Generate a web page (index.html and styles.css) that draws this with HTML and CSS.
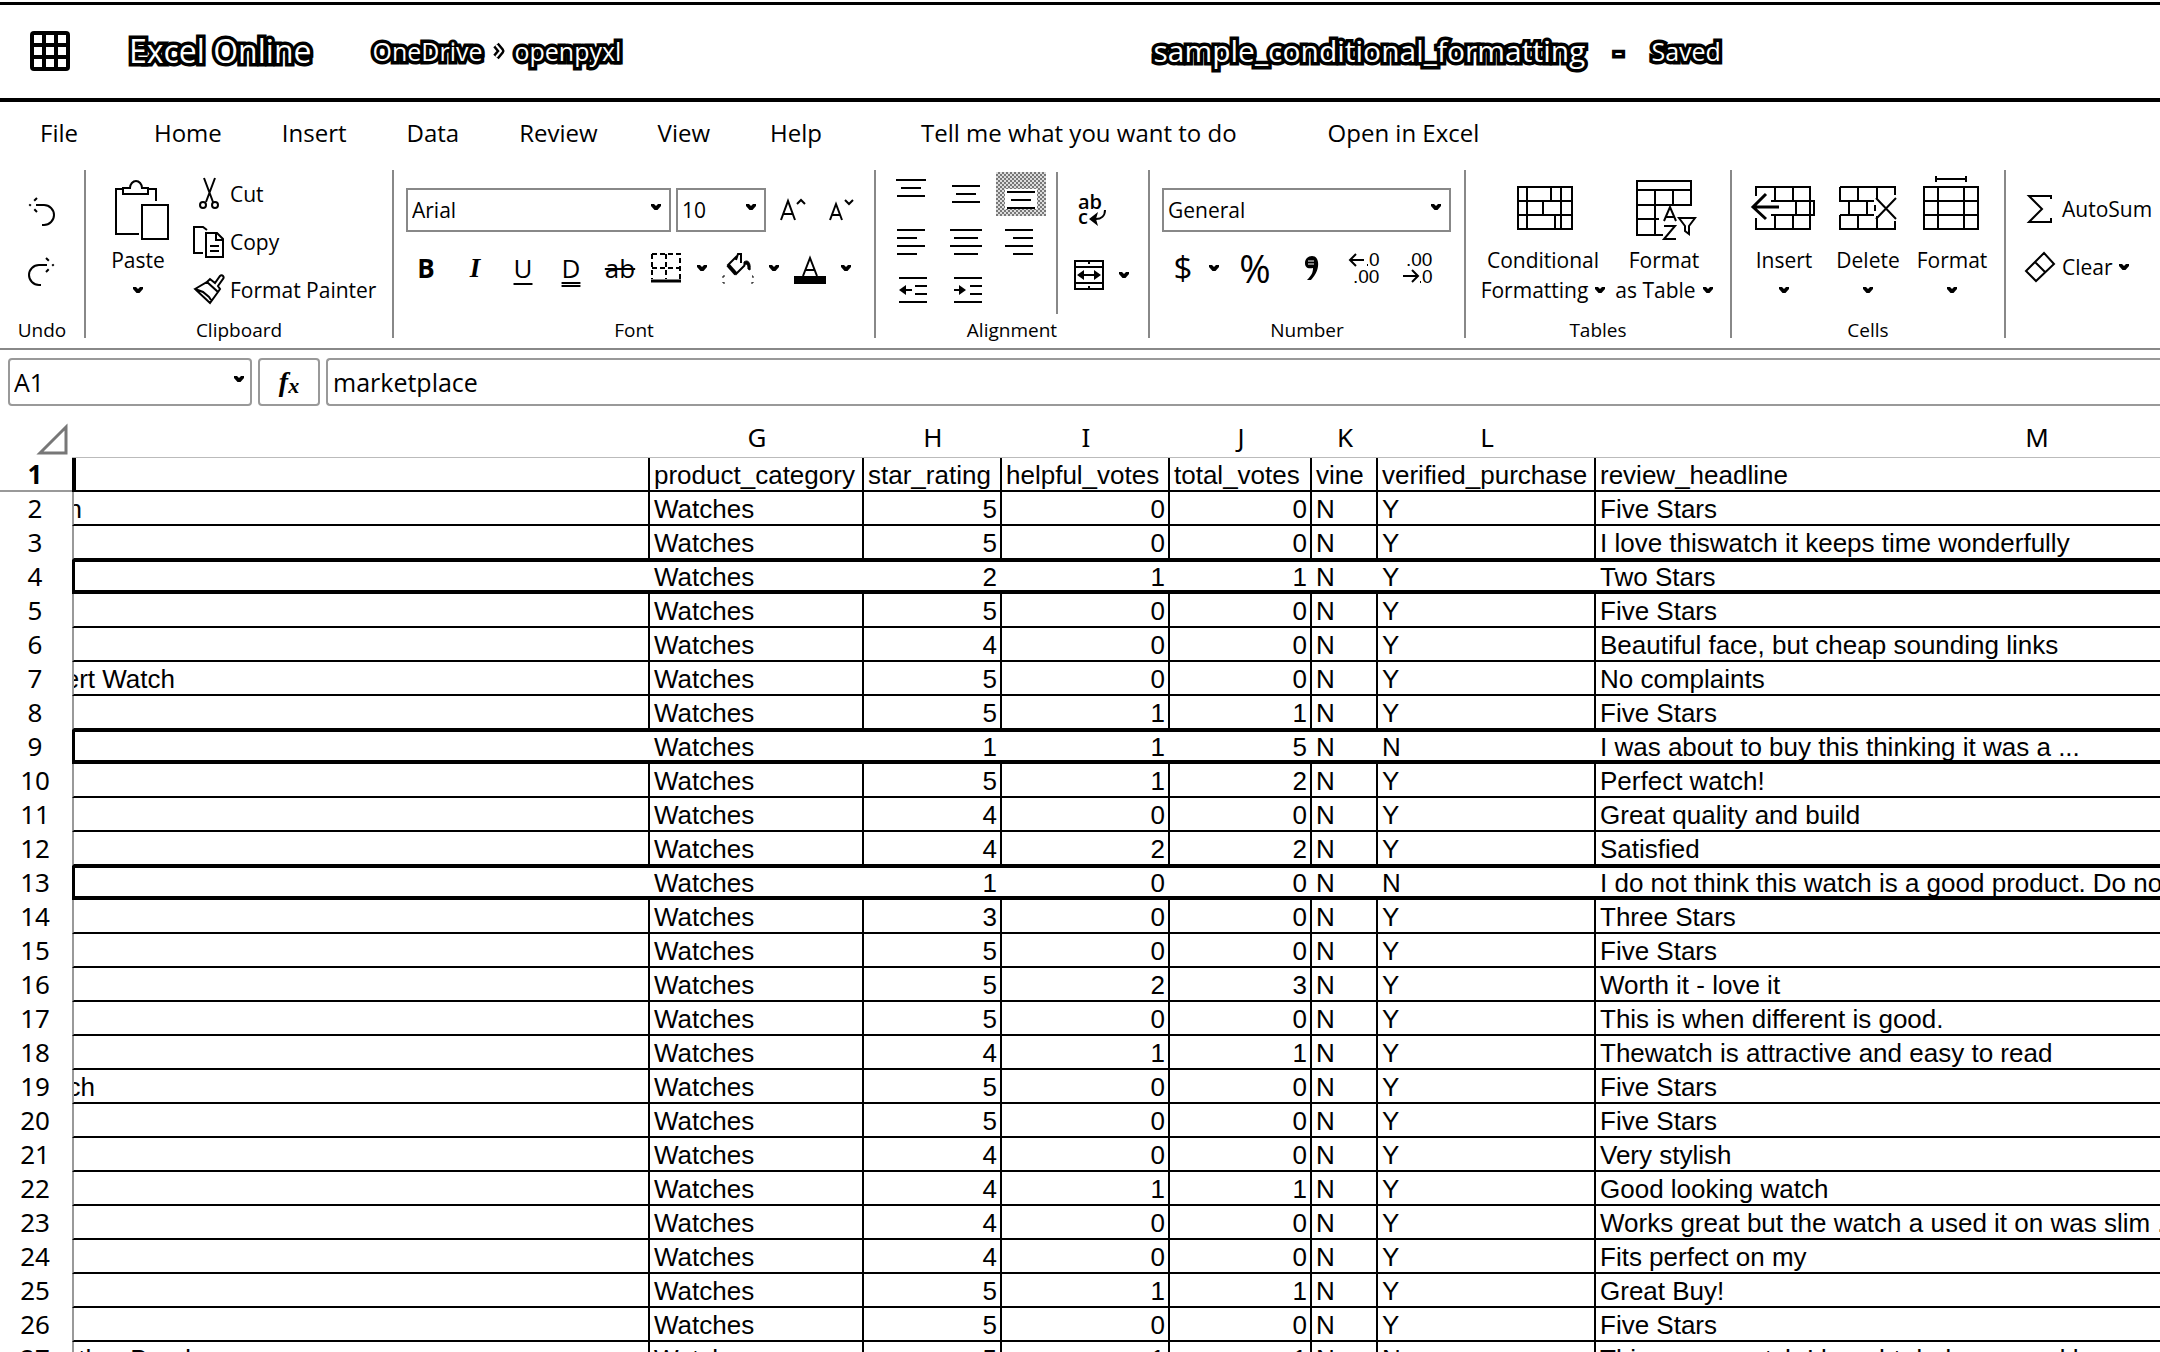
FILE: index.html
```html
<!DOCTYPE html>
<html lang="en">
<head>
<meta charset="utf-8">
<title>sample_conditional_formatting - Excel Online</title>
<link rel="stylesheet" href="styles.css">
</head>
<body>
<svg class="defs" aria-hidden="true">
  <symbol id="chev" viewBox="0 0 10 6"><path d="M0 0h3l2 2 2-2h3v2L6.500 6h-3L0 2z" fill="#000"/></symbol>
</svg>
<header class="top">
  <button class="waffle" aria-label="App launcher"><svg width="42" height="42" viewBox="0 0 42 42"><rect x="1" y="1" width="40" height="40" rx="4"/><path fill="#fff" d="M5 5h8v8H5zM17 5h8v8h-8zM29 5h8v8h-8zM5 17h8v8H5zM17 17h8v8h-8zM29 17h8v8h-8zM5 29h8v8H5zM17 29h8v8h-8zM29 29h8v8h-8z"/></svg></button>
  <span class="brand outline">Excel Online</span>
  <nav class="crumbs outline"><a href="#">OneDrive</a><svg width="14" height="20" viewBox="0 0 14 20"><path d="M4 4l5 6-5 6" fill="none" stroke="#000" stroke-width="7"/><path d="M4 4l5 6-5 6" fill="none" stroke="#fff" stroke-width="2"/></svg><a href="#">openpyxl</a></nav>
  <div class="doc outline"><span class="name">sample_conditional_formatting</span><span>-</span><span>Saved</span></div>
</header>
<nav class="menu">
  <a class="file" href="#">File</a><a href="#">Home</a><a href="#">Insert</a><a href="#">Data</a><a href="#">Review</a><a href="#">View</a><a class="help" href="#">Help</a><a class="tell" href="#">Tell me what you want to do</a><a href="#">Open in Excel</a>
</nav>
<section class="ribbon">
  <div class="group undo">
    <div class="body">
      <button aria-label="Undo"><svg width="26" height="32" viewBox="0 0 26 32"><path d="M7 9h8a10 10 0 0 1 0 20h-2" class="ln"/><path d="M8 2L1 9l7 7" class="ln" stroke-dasharray="4 5 2 5"/></svg></button>
      <button aria-label="Redo"><svg width="26" height="32" viewBox="0 0 26 32"><path d="M18 9h-8a10 10 0 0 0 0 20h2" class="ln"/><path d="M17 2l7 7-7 7" class="ln" stroke-dasharray="4 5 2 5"/></svg></button>
    </div>
    <div class="label">Undo</div>
  </div>
  <div class="group clipboard">
    <div class="body">
      <button class="big paste"><svg width="56" height="60" viewBox="0 0 56 60"><path class="ln" d="M9 9H2v45h23M35 9h7v12M9 14V8h7c0-4 3-7 6-7s6 3 6 7h6v6z"/><rect class="ln" x="28" y="25" width="26" height="34"/></svg><span>Paste</span><span><svg class="chev"><use href="#chev"/></svg></span></button>
      <div class="list">
        <button><svg width="34" height="34" viewBox="0 0 34 34"><path class="ln" d="M12 1l9 24M23 1l-9 24"/><circle class="ln" cx="11" cy="28" r="3"/><circle class="ln" cx="23" cy="28" r="3"/></svg>Cut</button>
        <button><svg width="34" height="34" viewBox="0 0 34 34"><path class="ln" d="M11 28H2V2h9l4 3M14 8h11l6 6v18H14zM24 8v7h7M18 21h9M18 26h9"/></svg>Copy</button>
        <button><svg width="34" height="34" viewBox="0 0 34 34"><path class="ln" d="M3 16l12-7 11 10-8 11zM15 9l3-3 5 4 5-7c2-2 5 1 3 3l-5 7 2 3-2 3M3 16l8 3 6 5 2 3"/></svg>Format Painter</button>
      </div>
    </div>
    <div class="label">Clipboard</div>
  </div>
  <div class="group font">
    <div class="body stack">
      <div class="line">
        <span class="drop face"><select aria-label="Font"><option>Arial</option></select><svg class="chev"><use href="#chev"/></svg></span>
        <span class="drop size"><select aria-label="Font size"><option>10</option></select><svg class="chev"><use href="#chev"/></svg></span>
        <button class="grow" aria-label="Grow font"><svg width="28" height="24" viewBox="0 0 28 24"><path class="ln" d="M2 22L9 3l7 19M4 16h10M18 6l4-4 4 4"/></svg></button>
        <button class="grow shrink" aria-label="Shrink font"><svg width="28" height="24" viewBox="0 0 28 24"><path class="ln" d="M3 22L9 6l6 16M5 17h8M18 2l4 4 4-4"/></svg></button>
      </div>
      <div class="line tools">
        <button class="t b">B</button><button class="t i">I</button><button class="t u">U</button><button class="t d">D</button><button class="t s">ab</button>
        <button class="t" aria-label="Borders"><svg width="32" height="32" viewBox="0 0 32 32"><path class="ln" d="M2 2h28v25M2 2v25M16 2v25M2 16h28" stroke-dasharray="5 3"/><path d="M1 29h30" stroke="#000" stroke-width="3"/></svg></button><button class="arrow" aria-label="More borders"><svg class="chev"><use href="#chev"/></svg></button>
        <button class="t" aria-label="Fill colour"><svg width="32" height="32" viewBox="0 0 32 32"><path d="M14 8l2-6h3v9M15 4L6 13l8 9 9-9" fill="none" stroke="#000" stroke-width="2"/><path d="M6 13l8 9" stroke="#000" stroke-width="4"/><path d="M22 10c4-3 7 1 6 8l-2-1c0-4-1-6-4-4zM1 26v-2h2M30 24h1v2M1 30v1h2M29 31h2v-1" stroke="#000" fill="none" stroke-width="1"/><path d="M22 10c4-3 7 1 6 8l-2-1c0-4-1-6-4-4z"/></svg></button><button class="arrow" aria-label="More fills"><svg class="chev"><use href="#chev"/></svg></button>
        <button class="t" aria-label="Font colour"><svg width="32" height="32" viewBox="0 0 32 32"><path class="ln" d="M9 24l7-18 7 18M12 18h8"/><path d="M0 24h32v8H0z"/></svg></button><button class="arrow" aria-label="More font colours"><svg class="chev"><use href="#chev"/></svg></button>
      </div>
    </div>
    <div class="label">Font</div>
  </div>
  <div class="group align">
    <div class="body">
      <div class="tiles">
        <button aria-label="Top align"><svg width="32" height="32" viewBox="0 0 32 32"><path class="ln" d="M1 2h30M6 10h20M2 18h28"/></svg></button>
        <button aria-label="Middle align"><svg width="32" height="32" viewBox="0 0 32 32"><path class="ln" d="M2 8h28M6 16h20M2 24h28"/></svg></button>
        <button class="on" aria-label="Bottom align"><svg width="32" height="32" viewBox="0 0 32 32"><path d="M0 11h32v20H0z" fill="#fff"/><path class="ln" d="M2 14h28M6 22h20M2 30h28"/></svg></button>
        <button aria-label="Align left"><svg width="32" height="32" viewBox="0 0 32 32"><path class="ln" d="M2 4h28M2 12h20M2 20h28M2 28h20"/></svg></button>
        <button aria-label="Centre"><svg width="32" height="32" viewBox="0 0 32 32"><path class="ln" d="M0 4h32M4 12h24M0 20h32M4 28h24"/></svg></button>
        <button aria-label="Align right"><svg width="32" height="32" viewBox="0 0 32 32"><path class="ln" d="M0 4h28M8 12h20M0 20h28M8 28h20"/></svg></button>
        <button aria-label="Decrease indent"><svg width="32" height="32" viewBox="0 0 32 32"><path class="ln" d="M4 4h28M20 12h12M20 20h12M4 28h28M8 16h9"/><path d="M4 16l7-5v10z"/></svg></button>
        <button aria-label="Increase indent"><svg width="32" height="32" viewBox="0 0 32 32"><path class="ln" d="M4 4h28M20 12h12M20 20h12M4 28h28M4 16h9"/><path d="M16 16l-7-5v10z"/></svg></button>
      </div>
      <div class="side">
        <button aria-label="Wrap text"><svg width="32" height="34" viewBox="0 0 32 34"><text class="wrap"><tspan x="3" y="17">ab</tspan><tspan x="3" y="32">c</tspan></text><path class="ln" d="M30 18c0 6-4 9-9 9"/><path d="M14 27l9-7-2 7 2 7z"/></svg></button>
        <span><button aria-label="Merge cells"><svg width="32" height="32" viewBox="0 0 32 32"><path class="ln" d="M2 2h28v28H2zM2 8h28M2 24h28M16 2v3M16 27v3M8 16h16"/><path d="M4 16l7-5v10zM28 16l-7-5v10z"/></svg></button><button class="arrow" aria-label="More merge options"><svg class="chev"><use href="#chev"/></svg></button></span>
      </div>
    </div>
    <div class="label">Alignment</div>
  </div>
  <div class="group number">
    <div class="body stack">
      <div class="line"><span class="drop general"><select aria-label="Number format"><option>General</option></select><svg class="chev"><use href="#chev"/></svg></span></div>
      <div class="line tools">
        <button class="cur">$</button><button class="arrow" aria-label="More currencies"><svg class="chev"><use href="#chev"/></svg></button><button class="pct">%</button>
        <button class="n" aria-label="Comma style"><svg width="32" height="32" viewBox="0 0 32 32"><path d="M16 4c8 0 9 14-1 24h-4c5-5 6-8 6-12-6 1-8-1-8-5 0-4 3-7 7-7z"/><path d="M12 9h6M12 12h6" stroke="#fff"/></svg></button>
        <button class="n" aria-label="Increase decimal"><svg width="34" height="34" viewBox="0 0 34 34"><text x="21" y="15" class="dec">0</text><text x="5" y="32" class="dec">.00</text><path d="M2 9h14M8 3L2 9l6 6M19 14h1" class="ln"/></svg></button>
        <button class="n" aria-label="Decrease decimal"><svg width="34" height="34" viewBox="0 0 34 34"><text x="5" y="15" class="dec">.00</text><text x="21" y="32" class="dec">0</text><path d="M2 25h14M11 19l6 6-6 6M19 31h1" class="ln"/></svg></button>
      </div>
    </div>
    <div class="label">Number</div>
  </div>
  <div class="group tables">
    <div class="body">
      <button class="big wide"><svg width="60" height="60" viewBox="0 0 60 60"><path class="ln" d="M3 7h54v42H3zM3 21h54M3 35h54M12 7v42M46 7v42M36 7v14M28 21v14M40 35v14"/></svg><span>Conditional</span><span>Formatting <svg class="chev"><use href="#chev"/></svg></span></button>
      <button class="big mid"><svg width="60" height="60" viewBox="0 0 60 60"><path class="ln" d="M1 1h54v24H1zM1 10h54M1 25v30h26M1 39h22M19 10v45M37 10v15"/><path d="M27 27h16v33H27z" fill="#fff"/><path class="ln" d="M28 41l6-14 6 14M30 37h8M28 46h11L28 59h12M43 38h16l-6 8v8l-4-3v-5z"/></svg><span>Format</span><span>as Table <svg class="chev"><use href="#chev"/></svg></span></button>
    </div>
    <div class="label">Tables</div>
  </div>
  <div class="group cells">
    <div class="body">
      <button class="big"><svg width="66" height="60" viewBox="0 0 66 60"><path class="ln" d="M5 7h54v42H5zM5 21h58v14H5M24 7v14M42 7v14M45 21v14M24 35v14M42 35v14"/><path d="M4 16h16v22H4z" fill="#fff"/><path d="M2 27h26M15 14L2 27l13 12" fill="none" stroke="#000" stroke-width="3"/></svg><span>Insert</span><span><svg class="chev"><use href="#chev"/></svg></span></button>
      <button class="big"><svg width="66" height="60" viewBox="0 0 66 60"><path class="ln" d="M5 7h55v8M5 7v14h34M5 35v14h55v-8M5 35h34M14 21v14M32 21v14M23 7v14M42 7v12M23 35v14M42 36v13"/><path class="ln" d="M41 18l20 21M61 18L41 39M40 25v6"/></svg><span>Delete</span><span><svg class="chev"><use href="#chev"/></svg></span></button>
      <button class="big"><svg width="66" height="60" viewBox="0 0 66 60"><path class="ln" d="M5 7h54v42H5zM5 21h54M5 35h54M19 7v42M45 7v42M17-1h30M17-4v6M47-4v6"/></svg><span>Format</span><span><svg class="chev"><use href="#chev"/></svg></span></button>
    </div>
    <div class="label">Cells</div>
  </div>
  <div class="editing">
    <button><svg width="32" height="32" viewBox="0 0 32 32"><path class="ln" d="M27 6V3H5l13 13L5 29h22v-4"/></svg>AutoSum</button>
    <button><svg width="32" height="32" viewBox="0 0 32 32"><path class="ln" d="M20 2l10 11-18 17L2 20zM11 11l10 10"/></svg>Clear <svg class="chev"><use href="#chev"/></svg></button>
  </div>
</section>
<div class="formula">
  <span class="drop ref"><input aria-label="Name box" value="A1"><svg class="chev"><use href="#chev"/></svg></span>
  <button class="fx" aria-label="Insert function"><i>f</i><sub>x</sub></button>
  <input class="value" aria-label="Formula" value="marketplace">
</div>
<main class="sheet">
<table>
<colgroup><col class="c0"><col class="cf"><col class="cg"><col class="ch"><col class="ci"><col class="cj"><col class="ck"><col class="cl"><col class="cm"></colgroup>
<thead><tr><th><svg width="32" height="32" viewBox="0 0 32 32"><path d="M4 30L30 4v26z" fill="none" stroke="#777" stroke-width="3"/></svg></th><th></th><th>G</th><th>H</th><th>I</th><th>J</th><th>K</th><th>L</th><th>M</th></tr></thead>
<tbody>
<tr class="first"><th>1</th><td></td><td>product_category</td><td class="l">star_rating</td><td class="l">helpful_votes</td><td class="l">total_votes</td><td>vine</td><td>verified_purchase</td><td>review_headline</td></tr>
<tr><th>2</th><td><span class="tail" style="width:8px">n</span></td><td>Watches</td><td>5</td><td>0</td><td>0</td><td>N</td><td>Y</td><td>Five Stars</td></tr>
<tr><th>3</th><td></td><td>Watches</td><td>5</td><td>0</td><td>0</td><td>N</td><td>Y</td><td>I love thiswatch it keeps time wonderfully</td></tr>
<tr class="hit"><th>4</th><td></td><td>Watches</td><td>2</td><td>1</td><td>1</td><td>N</td><td>Y</td><td>Two Stars</td></tr>
<tr><th>5</th><td></td><td>Watches</td><td>5</td><td>0</td><td>0</td><td>N</td><td>Y</td><td>Five Stars</td></tr>
<tr><th>6</th><td></td><td>Watches</td><td>4</td><td>0</td><td>0</td><td>N</td><td>Y</td><td>Beautiful face, but cheap sounding links</td></tr>
<tr><th>7</th><td><span class="tail" style="width:101px">ert Watch</span></td><td>Watches</td><td>5</td><td>0</td><td>0</td><td>N</td><td>Y</td><td>No complaints</td></tr>
<tr><th>8</th><td></td><td>Watches</td><td>5</td><td>1</td><td>1</td><td>N</td><td>Y</td><td>Five Stars</td></tr>
<tr class="hit"><th>9</th><td></td><td>Watches</td><td>1</td><td>1</td><td>5</td><td>N</td><td>N</td><td>I was about to buy this thinking it was a ...</td></tr>
<tr><th>10</th><td></td><td>Watches</td><td>5</td><td>1</td><td>2</td><td>N</td><td>Y</td><td>Perfect watch!</td></tr>
<tr><th>11</th><td></td><td>Watches</td><td>4</td><td>0</td><td>0</td><td>N</td><td>Y</td><td>Great quality and build</td></tr>
<tr><th>12</th><td></td><td>Watches</td><td>4</td><td>2</td><td>2</td><td>N</td><td>Y</td><td>Satisfied</td></tr>
<tr class="hit"><th>13</th><td></td><td>Watches</td><td>1</td><td>0</td><td>0</td><td>N</td><td>N</td><td>I do not think this watch is a good product. Do not</td></tr>
<tr><th>14</th><td></td><td>Watches</td><td>3</td><td>0</td><td>0</td><td>N</td><td>Y</td><td>Three Stars</td></tr>
<tr><th>15</th><td></td><td>Watches</td><td>5</td><td>0</td><td>0</td><td>N</td><td>Y</td><td>Five Stars</td></tr>
<tr><th>16</th><td></td><td>Watches</td><td>5</td><td>2</td><td>3</td><td>N</td><td>Y</td><td>Worth it - love it</td></tr>
<tr><th>17</th><td></td><td>Watches</td><td>5</td><td>0</td><td>0</td><td>N</td><td>Y</td><td>This is when different is good.</td></tr>
<tr><th>18</th><td></td><td>Watches</td><td>4</td><td>1</td><td>1</td><td>N</td><td>Y</td><td>Thewatch is attractive and easy to read</td></tr>
<tr><th>19</th><td><span class="tail" style="width:21px">ch</span></td><td>Watches</td><td>5</td><td>0</td><td>0</td><td>N</td><td>Y</td><td>Five Stars</td></tr>
<tr><th>20</th><td></td><td>Watches</td><td>5</td><td>0</td><td>0</td><td>N</td><td>Y</td><td>Five Stars</td></tr>
<tr><th>21</th><td></td><td>Watches</td><td>4</td><td>0</td><td>0</td><td>N</td><td>Y</td><td>Very stylish</td></tr>
<tr><th>22</th><td></td><td>Watches</td><td>4</td><td>1</td><td>1</td><td>N</td><td>Y</td><td>Good looking watch</td></tr>
<tr><th>23</th><td></td><td>Watches</td><td>4</td><td>0</td><td>0</td><td>N</td><td>Y</td><td>Works great but the watch a used it on was slim ...</td></tr>
<tr><th>24</th><td></td><td>Watches</td><td>4</td><td>0</td><td>0</td><td>N</td><td>Y</td><td>Fits perfect on my</td></tr>
<tr><th>25</th><td></td><td>Watches</td><td>5</td><td>1</td><td>1</td><td>N</td><td>Y</td><td>Great Buy!</td></tr>
<tr><th>26</th><td></td><td>Watches</td><td>5</td><td>0</td><td>0</td><td>N</td><td>Y</td><td>Five Stars</td></tr>
<tr><th>27</th><td><span class="tail" style="width:117px">ther Band</span></td><td>Watches</td><td>5</td><td>1</td><td>1</td><td>N</td><td>N</td><td>This was a watch I bought dad once and he was so thi</td></tr>
</tbody>
</table>
</main>
</body>
</html>
```
FILE: styles.css
```css
* { box-sizing: border-box; }
body {
  margin: 0;
  height: 100vh;
  overflow: hidden;
  display: flex;
  flex-direction: column;
  background: #fff;
  color: #000;
  font: 21px/30px "Open Sans", sans-serif;
}
a { color: inherit; text-decoration: none; }
button { background: none; border: 0; padding: 0; margin: 0; font: inherit; color: inherit; }
svg { display: block; overflow: visible; flex: none; }
.defs { position: absolute; width: 0; height: 0; }
.ln { fill: none; stroke: #000; stroke-width: 2; }
.chev { width: 10px; height: 6px; }

.top {
  flex: none;
  display: flex;
  align-items: center;
  margin-top: 2px;
  height: 100px;
  border-top: 3px solid #000;
  border-bottom: 4px solid #000;
  padding: 0 0 2px 29px;
  white-space: nowrap;
}
.outline { color: #fff; -webkit-text-stroke: 7px #000; stroke-linejoin: round; paint-order: stroke fill; font-size: 25px; }
.top .brand { font-size: 32px; margin-left: 58px; }
.crumbs { display: flex; align-items: center; gap: 9px; margin-left: 61px; }
.doc { display: flex; align-items: center; gap: 29px; margin-left: 532px; }
.doc .name { font-size: 30px; }

.menu { flex: none; display: flex; gap: 60px; padding: 13px 0 19px 40px; font-size: 24px; line-height: 36px; white-space: nowrap; }
.file { margin-right: 16px; }
.help { margin-right: 39px; }
.tell { margin-right: 31px; }

.ribbon { flex: none; display: flex; height: 180px; padding-bottom: 10px; border-bottom: 2px solid #888; white-space: nowrap; }
.group { flex: none; display: flex; flex-direction: column; border-right: 2px solid #888; }
.body { flex: 1; display: flex; }
.label { font-size: 19px; line-height: 16px; text-align: center; }
.undo { width: 86px; }
.undo .body { flex-direction: column; align-items: center; gap: 28px; padding-top: 26px; }
.clipboard { width: 308px; }
.clipboard .body { padding-left: 22px; gap: 24px; }
.font { width: 482px; }
.align { width: 274px; }
.number { width: 316px; }
.tables { width: 266px; }
.cells { width: 274px; }
.big { display: flex; flex-direction: column; align-items: center; padding-top: 10px; width: 60px; }
.big > svg { margin-bottom: 5px; }
.big.paste > svg { margin-left: 8px; }
.big span { display: flex; align-items: center; justify-content: center; gap: 7px; height: 30px; }
.list button { display: flex; align-items: center; gap: 4px; height: 48px; }

.stack { flex-direction: column; padding: 18px 0 0 12px; gap: 18px; }
.line { display: flex; align-items: center; gap: 5px; }
.tools { height: 36px; gap: 0; }
.drop { position: relative; display: block; height: 44px; }
.drop select, .drop input {
  appearance: none;
  width: 100%;
  height: 100%;
  border: 2px solid #888;
  border-radius: 0;
  background: #fff;
  padding: 0 4px;
  font: inherit;
  color: inherit;
}
.drop .chev { position: absolute; right: 10px; top: 16px; }
.face { width: 265px; }
.size { width: 90px; }
.grow { margin-left: 8px; }
.shrink { margin-left: 15px; }
.t { width: 52px; height: 36px; display: flex; align-items: center; justify-content: center; font-size: 26px; }
.t.b { font-weight: 700; width: 40px; }
.t.i { font: italic 700 27px "Liberation Serif", serif; width: 58px; }
.t.u { text-decoration: underline 2px; text-underline-offset: 5px; width: 38px; }
.t.d { text-decoration: underline double 2px; text-underline-offset: 4px; width: 58px; }
.t.s { text-decoration: line-through 2px; width: 40px; }
.arrow { display: flex; width: 20px; justify-content: center; align-items: center; }

.tiles { display: grid; grid-template-columns: 50px 50px 50px; grid-auto-rows: 44px; gap: 4px 5px; margin: 2px 10px 0 10px; }
.tiles button { display: flex; align-items: center; justify-content: center; }
.tiles .on { background: repeating-conic-gradient(#777 0 25%, #ddd 0 50%) 0 0 / 4px 4px; }
.side { height: 142px; margin-top: 2px; border-left: 2px solid #888; padding: 20px 0 0 15px; }
.side > button { margin-left: 2px; }
.side span { display: flex; gap: 9px; margin-top: 26px; }
.wrap { font: 600 20px "Open Sans", sans-serif; }
.dec { font: 19px "Liberation Sans", sans-serif; }
.cur { font-size: 33px; width: 42px; }
.pct { font-size: 38px; width: 60px; margin-left: 1px; }
.n { width: 53px; display: flex; justify-content: center; }
.general { width: 289px; }

.tables .wide { width: 130px; margin-left: 12px; }
.tables .mid { width: 108px; margin-left: 2px; }
.tables .big > svg { margin-left: 4px; }
.cells .body { padding-left: 22px; gap: 24px; }
.editing { padding: 24px 0 0 18px; display: flex; flex-direction: column; gap: 28px; align-items: flex-start; }
.editing button { display: flex; align-items: center; gap: 6px; height: 30px; }

.formula { flex: none; display: flex; gap: 6px; margin-top: 8px; padding-left: 8px; font-size: 25px; height: 48px; }
.ref { width: 244px; height: 48px; }
.drop.ref input, .fx, .value { border: 2px solid #999; border-radius: 4px; background: #fff; }
.ref .chev { top: 18px; right: 8px; }
.fx { width: 62px; font: italic 700 28px "Liberation Serif", serif; }
.fx sub { font-size: 22px; vertical-align: -2px; }
.value { flex: 1; min-width: 0; border-right: 0; border-radius: 4px 0 0 4px; padding: 0 5px; font: inherit; color: inherit; }

.sheet { flex: 1; min-height: 0; overflow: hidden; padding-top: 3px; }
table { table-layout: fixed; width: 2478px; border-spacing: 0; font: 26px/32px "Liberation Sans", sans-serif; }
.c0 { width: 72px; } .cf { width: 578px; } .cg { width: 214px; } .ch { width: 138px; } .ci { width: 168px; }
.cj { width: 142px; } .ck { width: 66px; } .cl { width: 218px; } .cm { width: 882px; }
th { font: 26px/30px "Noto Sans", sans-serif; padding: 0 2px 3px 0; }
thead th { height: 49px; padding: 7px 0 0; border-bottom: 1px solid #bbb; }
thead th:first-child { border-bottom: 0; padding: 11px 0 0 36px; }
td { height: 34px; padding: 2px 4px 0; line-height: 30px; border-right: 2px solid #000; border-bottom: 2px solid #000; white-space: nowrap; overflow: hidden; }
td:nth-child(2) { border-left: 2px solid #999; padding-left: 0; }
td:nth-child(4), td:nth-child(5), td:nth-child(6) { text-align: right; padding-right: 3px; }
tbody .l.l { text-align: left; }
.first th { font-weight: 700; border-bottom: 2px solid #999; padding-bottom: 1px; }
.first td:nth-child(2) { border-left: 4px solid #000; }
.hit td { border-right: 0; box-shadow: inset 0 2px #000, inset 0 -2px #000; }
.hit td:nth-child(2) { border-left: 3px solid #000; }
.hit td:nth-child(4), .hit td:nth-child(5), .hit td:nth-child(6) { padding-right: 5px; }
.tail { display: flex; justify-content: flex-end; overflow: hidden; height: 30px; }
```
